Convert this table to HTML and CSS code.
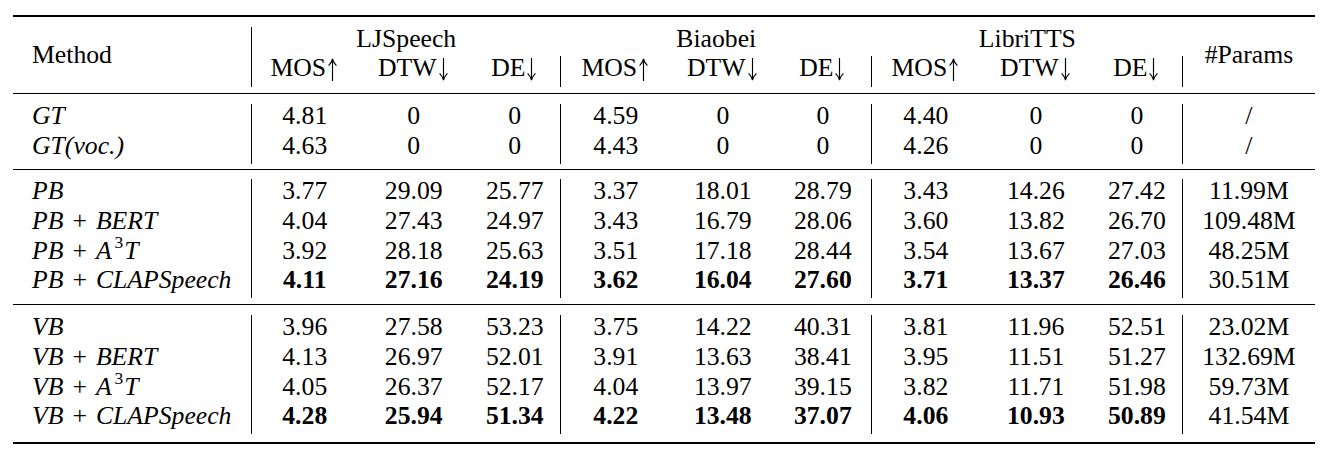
FILE: index.html
```html
<!DOCTYPE html>
<html>
<head>
<meta charset="utf-8">
<link rel="stylesheet" href="styles.css">
</head>
<body>
<table class="tbl">
  <colgroup>
    <col class="c-method">
    <col class="c-lj1"><col class="c-lj2"><col class="c-lj3">
    <col class="c-bb1"><col class="c-bb2"><col class="c-bb3">
    <col class="c-lt1"><col class="c-lt2"><col class="c-lt3">
    <col class="c-par">
  </colgroup>
  <tbody>
    <tr class="rule"><td colspan="11" class="rule-top"><div class="line heavy"></div></td></tr>
    <tr class="hrow">
      <td rowspan="2" class="m rs sep">Method</td>
      <td colspan="3">LJSpeech</td>
      <td colspan="3">Biaobei</td>
      <td colspan="3">LibriTTS</td>
      <td rowspan="2" class="rs">#Params</td>
    </tr>
    <tr class="hrow">
      <td>MOS<svg class="arr" viewBox="0 0 13 23"><path d="M6.5 1.2V23M2.6 7.6C4.6 5.6 5.8 3.6 6.5 0.8C7.2 3.6 8.4 5.6 10.4 7.6"/></svg></td>
      <td>DTW<svg class="arr" viewBox="0 0 13 23"><path d="M6.5 0V21.8M2.6 15.4C4.6 17.4 5.8 19.4 6.5 22.2C7.2 19.4 8.4 17.4 10.4 15.4"/></svg></td>
      <td class="sep">DE<svg class="arr" viewBox="0 0 13 23"><path d="M6.5 0V21.8M2.6 15.4C4.6 17.4 5.8 19.4 6.5 22.2C7.2 19.4 8.4 17.4 10.4 15.4"/></svg></td>
      <td>MOS<svg class="arr" viewBox="0 0 13 23"><path d="M6.5 1.2V23M2.6 7.6C4.6 5.6 5.8 3.6 6.5 0.8C7.2 3.6 8.4 5.6 10.4 7.6"/></svg></td>
      <td>DTW<svg class="arr" viewBox="0 0 13 23"><path d="M6.5 0V21.8M2.6 15.4C4.6 17.4 5.8 19.4 6.5 22.2C7.2 19.4 8.4 17.4 10.4 15.4"/></svg></td>
      <td class="sep">DE<svg class="arr" viewBox="0 0 13 23"><path d="M6.5 0V21.8M2.6 15.4C4.6 17.4 5.8 19.4 6.5 22.2C7.2 19.4 8.4 17.4 10.4 15.4"/></svg></td>
      <td>MOS<svg class="arr" viewBox="0 0 13 23"><path d="M6.5 1.2V23M2.6 7.6C4.6 5.6 5.8 3.6 6.5 0.8C7.2 3.6 8.4 5.6 10.4 7.6"/></svg></td>
      <td>DTW<svg class="arr" viewBox="0 0 13 23"><path d="M6.5 0V21.8M2.6 15.4C4.6 17.4 5.8 19.4 6.5 22.2C7.2 19.4 8.4 17.4 10.4 15.4"/></svg></td>
      <td class="sep">DE<svg class="arr" viewBox="0 0 13 23"><path d="M6.5 0V21.8M2.6 15.4C4.6 17.4 5.8 19.4 6.5 22.2C7.2 19.4 8.4 17.4 10.4 15.4"/></svg></td>
    </tr>
    <tr class="rule"><td colspan="11" class="rule-h"><div class="line"></div></td></tr>
    <tr>
      <td class="m sep"><i>GT</i></td>
      <td>4.81</td><td>0</td><td class="sep">0</td>
      <td>4.59</td><td>0</td><td class="sep">0</td>
      <td>4.40</td><td>0</td><td class="sep">0</td>
      <td>/</td>
    </tr>
    <tr>
      <td class="m sep"><i>GT(voc.)</i></td>
      <td>4.63</td><td>0</td><td class="sep">0</td>
      <td>4.43</td><td>0</td><td class="sep">0</td>
      <td>4.26</td><td>0</td><td class="sep">0</td>
      <td>/</td>
    </tr>
    <tr class="rule"><td colspan="11" class="rule-a"><div class="line"></div></td></tr>
    <tr>
      <td class="m sep"><i>PB</i></td>
      <td>3.77</td><td>29.09</td><td class="sep">25.77</td>
      <td>3.37</td><td>18.01</td><td class="sep">28.79</td>
      <td>3.43</td><td>14.26</td><td class="sep">27.42</td>
      <td>11.99M</td>
    </tr>
    <tr>
      <td class="m sep"><i>PB</i><span class="op">+</span><i>BERT</i></td>
      <td>4.04</td><td>27.43</td><td class="sep">24.97</td>
      <td>3.43</td><td>16.79</td><td class="sep">28.06</td>
      <td>3.60</td><td>13.82</td><td class="sep">26.70</td>
      <td>109.48M</td>
    </tr>
    <tr>
      <td class="m sep"><i>PB</i><span class="op">+</span><i class="a">A</i><span class="sup">3</span><i>T</i></td>
      <td>3.92</td><td>28.18</td><td class="sep">25.63</td>
      <td>3.51</td><td>17.18</td><td class="sep">28.44</td>
      <td>3.54</td><td>13.67</td><td class="sep">27.03</td>
      <td>48.25M</td>
    </tr>
    <tr class="best">
      <td class="m sep"><i>PB</i><span class="op">+</span><i>CLAPSpeech</i></td>
      <td>4.11</td><td>27.16</td><td class="sep">24.19</td>
      <td>3.62</td><td>16.04</td><td class="sep">27.60</td>
      <td>3.71</td><td>13.37</td><td class="sep">26.46</td>
      <td class="reg">30.51M</td>
    </tr>
    <tr class="rule"><td colspan="11" class="rule-b"><div class="line"></div></td></tr>
    <tr>
      <td class="m sep"><i>VB</i></td>
      <td>3.96</td><td>27.58</td><td class="sep">53.23</td>
      <td>3.75</td><td>14.22</td><td class="sep">40.31</td>
      <td>3.81</td><td>11.96</td><td class="sep">52.51</td>
      <td>23.02M</td>
    </tr>
    <tr>
      <td class="m sep"><i>VB</i><span class="op">+</span><i>BERT</i></td>
      <td>4.13</td><td>26.97</td><td class="sep">52.01</td>
      <td>3.91</td><td>13.63</td><td class="sep">38.41</td>
      <td>3.95</td><td>11.51</td><td class="sep">51.27</td>
      <td>132.69M</td>
    </tr>
    <tr>
      <td class="m sep"><i>VB</i><span class="op">+</span><i class="a">A</i><span class="sup">3</span><i>T</i></td>
      <td>4.05</td><td>26.37</td><td class="sep">52.17</td>
      <td>4.04</td><td>13.97</td><td class="sep">39.15</td>
      <td>3.82</td><td>11.71</td><td class="sep">51.98</td>
      <td>59.73M</td>
    </tr>
    <tr class="best">
      <td class="m sep"><i>VB</i><span class="op">+</span><i>CLAPSpeech</i></td>
      <td>4.28</td><td>25.94</td><td class="sep">51.34</td>
      <td>4.22</td><td>13.48</td><td class="sep">37.07</td>
      <td>4.06</td><td>10.93</td><td class="sep">50.89</td>
      <td class="reg">41.54M</td>
    </tr>
    <tr class="rule"><td colspan="11" class="rule-bot"><div class="line heavy"></div></td></tr>
  </tbody>
</table>
</body>
</html>
```
FILE: styles.css
```css
html, body {
  margin: 0;
  padding: 0;
  background: #fff;
}
body {
  font-family: "Liberation Serif", "Times New Roman", serif;
  font-size: 25.7px;
  color: #000;
}
.tbl {
  margin: 15px 0 0 13px;
  width: 1302px;
  table-layout: fixed;
  border-collapse: separate;
  border-spacing: 0;
}
.c-method { width: 238.7px; }
.c-lj1 { width: 106px; }
.c-lj2 { width: 112px; }
.c-lj3 { width: 91px; }
.c-bb1 { width: 110px; }
.c-bb2 { width: 104px; }
.c-bb3 { width: 97px; }
.c-lt1 { width: 108px; }
.c-lt2 { width: 112px; }
.c-lt3 { width: 91px; }
.c-par { width: 132px; }

.tbl td {
  padding: 0 0 6.1px 0;
  line-height: 23.6px;
  vertical-align: top;
  text-align: center;
  white-space: nowrap;
}
.tbl .hrow td {
  padding-bottom: 5.7px;
}
.tbl td.rs {
  padding-top: 15.5px;
  padding-bottom: 0;
}
.tbl td.m {
  text-align: left;
  padding-left: 19px;
}
.tbl td.sep {
  border-right: 1px solid #000;
}
.best td {
  font-weight: bold;
}
.best td.m, .best td.reg {
  font-weight: normal;
}
.op {
  display: inline-block;
  margin: 0 9px;
}
.a {
  margin-right: 1px;
}
.sup {
  display: inline-block;
  font-size: 0.68em;
  vertical-align: 11px;
  line-height: 0;
  margin: 0 1px 0 2px;
}
i { font-style: italic; }

.arr {
  display: inline-block;
  width: 13px;
  height: 23px;
  vertical-align: -5px;
  fill: none;
  stroke: #000;
  stroke-width: 1.15;
}

.tbl tr.rule td {
  padding: 0;
  line-height: 0;
}
.line {
  height: 1.3px;
  background: #000;
}
.line.heavy {
  height: 2px;
}
.tbl tr.rule td.rule-top { padding-bottom: 10px; }
.tbl tr.rule td.rule-h { padding-top: 6px; padding-bottom: 10px; }
.tbl tr.rule td.rule-a { padding-top: 5px; padding-bottom: 9.3px; }
.tbl tr.rule td.rule-b { padding-top: 6px; padding-bottom: 10px; }
.tbl tr.rule td.rule-bot { padding-top: 7.5px; }
```
